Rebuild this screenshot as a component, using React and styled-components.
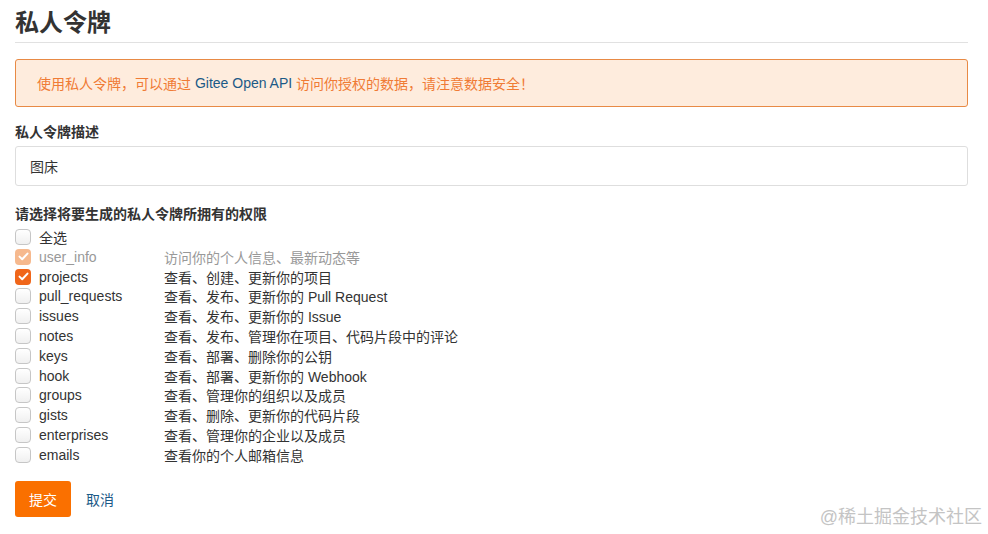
import React from "react";
import styled, { createGlobalStyle } from "styled-components";

const Global = createGlobalStyle`
  html, body { margin: 0; padding: 0; background: #fff; }
  body { font-family: "Liberation Sans", "Noto Sans CJK SC", sans-serif; color: #333; }
`;

const Page = styled.div`
  position: relative;
  width: 988px;
  height: 534px;
  box-sizing: border-box;
  padding: 8px 20px 0 15px;
  overflow: hidden;
`;

const Title = styled.h1`
  margin: 0;
  font-size: 24px;
  line-height: 30px;
  font-weight: 700;
  color: #333;
  padding-bottom: 4px;
  border-bottom: 1px solid #e1e1e1;
`;

const Alert = styled.div`
  margin-top: 16px;
  height: 46px;
  display: flex;
  align-items: center;
  padding: 0 21px;
  background: #feecdd;
  border: 1px solid #e88a45;
  border-radius: 3px;
  color: #f07b35;
  font-size: 14px;
`;

const Link = styled.span`
  color: #1b5a87;
`;

const Label = styled.div`
  margin-top: ${(p) => p.$mt}px;
  font-size: 14px;
  line-height: 20px;
  font-weight: 700;
  color: #333;
`;

const Input = styled.div`
  margin-top: 4px;
  height: 38px;
  border: 1px solid #dedede;
  border-radius: 3px;
  display: flex;
  align-items: center;
  padding: 0 14px;
  font-size: 14px;
  color: #333;
`;

const List = styled.div`
  margin-top: 3px;
  display: flex;
  flex-direction: column;
`;

const Row = styled.div`
  display: grid;
  grid-template-columns: 16px 117px 1fr;
  column-gap: 8px;
  align-items: center;
  height: 19.8px;
  font-size: 14px;
  color: ${(p) => (p.$disabled ? "#999" : "#333")};
`;

const Box = styled.span`
  width: 16px;
  height: 16px;
  box-sizing: border-box;
  border-radius: 4px;
  display: flex;
  align-items: center;
  justify-content: center;
  ${(p) =>
    p.$checked
      ? `background: ${p.$disabled ? "#f6b98e" : "#f0661a"}; border: none;`
      : `background: linear-gradient(#ffffff, #f0f0f0); border: 1px solid #c6c6c6;`}
`;

const Actions = styled.div`
  margin-top: 16px;
  display: flex;
  align-items: center;
  gap: 15px;
`;

const Button = styled.button`
  width: 56px;
  height: 36px;
  border: none;
  border-radius: 3px;
  background: #fa7000;
  color: #fff;
  font-size: 14px;
  font-family: inherit;
  padding: 0;
`;

const Cancel = styled.span`
  font-size: 14px;
  color: #1b5a87;
`;

const Watermark = styled.div`
  position: absolute;
  right: 6px;
  bottom: 6px;
  font-size: 18px;
  line-height: 22px;
  color: #c4c4c4;
`;

const Check = () => (
  <svg width="11" height="9" viewBox="0 0 11 9">
    <path d="M1.5 4.6 L4.2 7.2 L9.5 1.6" fill="none" stroke="#fff" strokeWidth="2" strokeLinecap="round" strokeLinejoin="round" />
  </svg>
);

const perms = [
  ["全选", ""],
  ["user_info", "访问你的个人信息、最新动态等", true, true],
  ["projects", "查看、创建、更新你的项目", true],
  ["pull_requests", "查看、发布、更新你的 Pull Request"],
  ["issues", "查看、发布、更新你的 Issue"],
  ["notes", "查看、发布、管理你在项目、代码片段中的评论"],
  ["keys", "查看、部署、删除你的公钥"],
  ["hook", "查看、部署、更新你的 Webhook"],
  ["groups", "查看、管理你的组织以及成员"],
  ["gists", "查看、删除、更新你的代码片段"],
  ["enterprises", "查看、管理你的企业以及成员"],
  ["emails", "查看你的个人邮箱信息"],
];

export default function App() {
  return (
    <Page>
      <Global />
      <Title>私人令牌</Title>
      <Alert>
        使用私人令牌，可以通过&nbsp;<Link>Gitee Open API</Link>&nbsp;访问你授权的数据，请注意数据安全！
      </Alert>
      <Label $mt={15}>私人令牌描述</Label>
      <Input>图床</Input>
      <Label $mt={18}>请选择将要生成的私人令牌所拥有的权限</Label>
      <List>
        {perms.map(([name, desc, checked, disabled]) => (
          <Row key={name} $disabled={disabled}>
            <Box $checked={checked} $disabled={disabled}>{checked && <Check />}</Box>
            <span>{name}</span>
            <span>{desc}</span>
          </Row>
        ))}
      </List>
      <Actions>
        <Button>提交</Button>
        <Cancel>取消</Cancel>
      </Actions>
      <Watermark>@稀土掘金技术社区</Watermark>
    </Page>
  );
}
